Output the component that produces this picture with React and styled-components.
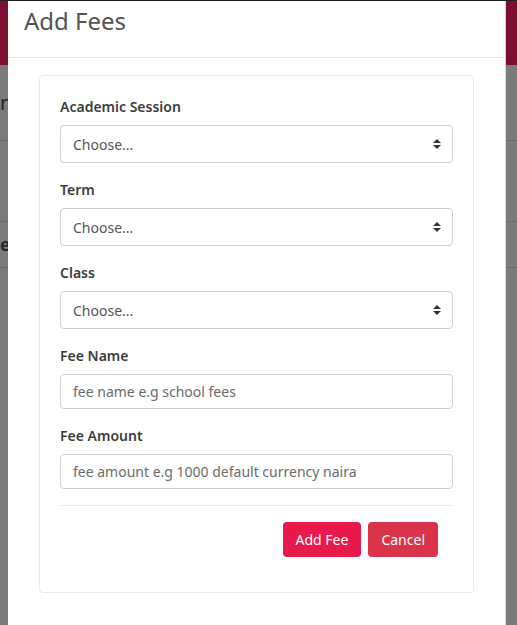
import React from "react";
import styled, { createGlobalStyle } from "styled-components";

const Global = createGlobalStyle`
  html, body { margin: 0; padding: 0; }
  body {
    width: 517px;
    height: 625px;
    overflow: hidden;
    font-family: "Noto Sans", "Open Sans", sans-serif;
    background: #7b7b7b;
  }
  * { box-sizing: border-box; }
`;

const Page = styled.div`
  position: relative;
  width: 517px;
  height: 625px;
  display: flex;
  flex-direction: column;
  background: #7b7b7b;
`;

const TopLine = styled.div`
  height: 1px;
  background: #1e1e1e;
`;

const NavBar = styled.div`
  height: 64px;
  background: #7c0f2f;
`;

const BgRow = styled.div`
  height: ${(p) => p.$h}px;
  border-bottom: 1px solid #6c6c6c;
  display: flex;
  align-items: center;
`;

const BgText = styled.span`
  font-size: ${(p) => p.$size}px;
  font-weight: ${(p) => p.$weight || 400};
  color: #262626;
  line-height: 1;
`;

const Modal = styled.div`
  position: absolute;
  left: 8px;
  top: 1px;
  width: 498px;
  bottom: -20px;
  background: #fff;
  border-right: 1px solid #d8d8d8;
  display: flex;
  flex-direction: column;
`;

const Header = styled.div`
  height: 57px;
  border-bottom: 1px solid #e6e6e6;
  padding: 0 16px;
  display: flex;
  align-items: flex-start;
`;

const Title = styled.h4`
  margin: 0;
  margin-top: 3px;
  font-size: 24px;
  font-weight: 400;
  color: #545454;
  line-height: 34px;
`;

const Body = styled.div`
  padding: 17px 31px 0 31px;
`;

const Card = styled.div`
  border: 1px solid #ebebeb;
  border-radius: 4px;
  padding: 20px 20px 35px 20px;
  display: flex;
  flex-direction: column;
`;

const Group = styled.div`
  display: flex;
  flex-direction: column;
  margin-bottom: 16px;
`;

const Label = styled.label`
  font-size: 14px;
  font-weight: 600;
  color: #3d3d3d;
  line-height: 21px;
  margin-bottom: 8px;
`;

const SelectWrap = styled.div`
  position: relative;
  height: 38px;
`;

const Select = styled.select`
  appearance: none;
  -webkit-appearance: none;
  width: 100%;
  height: 38px;
  border: 1px solid #cfcfcf;
  border-radius: 4px;
  background: #fff;
  padding: 0 12px;
  font-family: inherit;
  font-size: 14px;
  color: #555;
  outline: none;
`;

const Arrow = styled.svg`
  position: absolute;
  right: 12px;
  top: 14px;
  pointer-events: none;
`;

const Input = styled.input`
  width: 100%;
  height: 35px;
  border: 1px solid #cfcfcf;
  border-radius: 4px;
  padding: 0 12px;
  font-family: inherit;
  font-size: 14px;
  color: #555;
  outline: none;
  &::placeholder { color: #6b6b6b; }
`;

const Divider = styled.hr`
  border: 0;
  border-top: 1px solid #e9e9e9;
  margin: 0 0 16px 0;
`;

const Actions = styled.div`
  display: flex;
  justify-content: flex-end;
  gap: 7px;
  padding-right: 15px;
`;

const Button = styled.button`
  height: 35px;
  padding: 0 13px;
  border: 0;
  border-radius: 4px;
  background: ${(p) => p.$bg};
  color: #fff;
  font-family: inherit;
  font-size: 14px;
  cursor: pointer;
`;

const SortArrow = () => (
  <Arrow width="8" height="10" viewBox="0 0 8 10">
    <path d="M4 0 L8 4 H0 Z M0 6 H8 L4 10 Z" fill="#333" />
  </Arrow>
);

const SelectField = ({ label }) => (
  <Group>
    <Label>{label}</Label>
    <SelectWrap>
      <Select defaultValue="">
        <option value="">Choose...</option>
      </Select>
      <SortArrow />
    </SelectWrap>
  </Group>
);

const InputField = ({ label, placeholder }) => (
  <Group>
    <Label>{label}</Label>
    <Input placeholder={placeholder} />
  </Group>
);

export default function App() {
  return (
    <>
      <Global />
      <Page>
        <TopLine />
        <NavBar />
        <BgRow $h={76}>
          <BgText $size={20}>r</BgText>
        </BgRow>
        <BgRow $h={81} />
        <BgRow $h={46}>
          <BgText $size={17} $weight={700}>e</BgText>
        </BgRow>
        <Modal>
          <Header>
            <Title>Add Fees</Title>
          </Header>
          <Body>
            <Card>
              <SelectField label="Academic Session" />
              <SelectField label="Term" />
              <SelectField label="Class" />
              <InputField label="Fee Name" placeholder="fee name e.g school fees" />
              <InputField
                label="Fee Amount"
                placeholder="fee amount e.g 1000 default currency naira"
              />
              <Divider />
              <Actions>
                <Button $bg="#e8194d">Add Fee</Button>
                <Button $bg="#d9344a">Cancel</Button>
              </Actions>
            </Card>
          </Body>
        </Modal>
      </Page>
    </>
  );
}
